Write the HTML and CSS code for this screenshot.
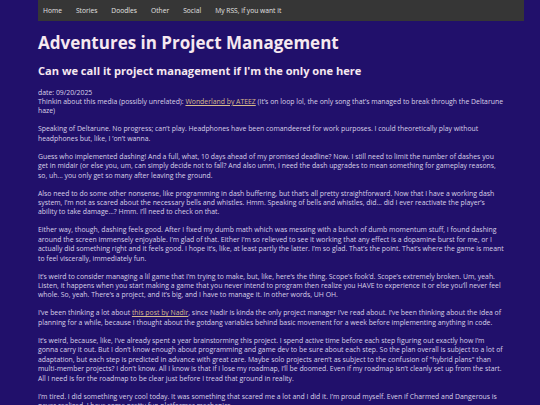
FILE: index.html
```html
<!DOCTYPE html>
<html lang="en">
<head>
    <meta charset="UTF-8">
    <meta name="viewport" content="width=device-width, initial-scale=1.0">
    <title>Adventures in Project Management</title>
    <link rel="stylesheet" href="styles.css">
</head>
<body>

    <!-- Top navigation -->
    <nav class="topnav">
        <a href="#">Home</a>
        <a href="#">Stories</a>
        <a href="#">Doodles</a>
        <a href="#">Other</a>
        <a href="#">Social</a>
        <a href="#">My RSS, if you want it</a>
    </nav>

    <main class="post">
        <h1>Adventures in Project Management</h1>
        <h2>Can we call it project management if I'm the only one here</h2>

        <p>date: 09/20/2025<br>
        Thinkin about this media (possibly unrelated): <a href="#">Wonderland by ATEEZ</a> (It’s on loop lol, the only song that’s managed to break through the Deltarune haze)</p>

        <p>Speaking of Deltarune. No progress; can’t play. Headphones have been comandeered for work purposes. I could theoretically play without headphones but, like, I ’on’t wanna.</p>

        <p>Guess who implemented dashing! And a full, what, 10 days ahead of my promised deadline? Now. I still need to limit the number of dashes you get in midair (or else you, um, can simply decide not to fall? And also umm, I need the dash upgrades to mean something for gameplay reasons, so, uh... you only get so many after leaving the ground.</p>

        <p>Also need to do some other nonsense, like programming in dash buffering, but that’s all pretty straightforward. Now that I have a working dash system, I’m not as scared about the necessary bells and whistles. Hmm. Speaking of bells and whistles, did... did I ever reactivate the player’s ability to take damage...? Hmm. I’ll need to check on that.</p>

        <p>Either way, though, dashing feels good. After I fixed my dumb math which was messing with a bunch of dumb momentum stuff, I found dashing around the screen immensely enjoyable. I’m glad of that. Either I’m so relieved to see it working that any effect is a dopamine burst for me, or I actually did something right and it feels good. I hope it’s, like, at least partly the latter. I’m so glad. That’s the point. That’s where the game is meant to feel viscerally, immediately fun.</p>

        <p>It’s weird to consider managing a lil game that I’m trying to make, but, like, here’s the thing. Scope’s fook’d. Scope’s extremely broken. Um, yeah. Listen, it happens when you start making a game that you never intend to program then realize you HAVE to experience it or else you’ll never feel whole. So, yeah. There’s a project, and it’s big, and I have to manage it. In other words, UH OH.</p>

        <p>I’ve been thinking a lot about <a href="#">this post by Nadir</a>, since Nadir is kinda the only project manager I’ve read about. I’ve been thinking about the idea of planning for a while, because I thought about the gotdang variables behind basic movement for a week before implementing anything in code.</p>

        <p>It’s weird, because, like, I’ve already spent a year brainstorming this project. I spend active time before each step figuring out exactly how I’m gonna carry it out. But I don’t know enough about programming and game dev to be sure about each step. So the plan overall is subject to a lot of adaptation, but each step is predicted in advance with great care. Maybe solo projects aren’t as subject to the confusion of "hybrid plans" than multi-member projects? I don’t know. All I know is that if I lose my roadmap, I’ll be doomed. Even if my roadmap isn’t cleanly set up from the start. All I need is for the roadmap to be clear just before I tread that ground in reality.</p>

        <p>I’m tired. I did something very cool today. It was something that scared me a lot and I did it. I’m proud myself. Even if Charmed and Dangerous is never realized, I have some pretty fun platformer mechanics.</p>
    </main>

</body>
</html>
```

FILE: styles.css
```css
body {
    font-family: "Open Sans", Arial, sans-serif;
    background-color: #21106b;
    color: #d9d0e8;
    margin: 0;
    padding: 0 16px 0 38px;
}

.topnav {
    display: flex;
    background-color: #363636;
    height: 21px;
    align-items: center;
    padding: 0 5px;
    gap: 14px;
}

.topnav a {
    color: #e2e2e2;
    text-decoration: none;
    font-size: 6.7px;
}

.post {
    padding-right: 19px;
}

.post h1 {
    font-size: 17px;
    color: #f6e8f0;
    margin: 10px 0 0;
    line-height: 24px;
}

.post h2 {
    font-size: 11.1px;
    color: #f6e8f0;
    margin: 8px 0 0;
    line-height: 16px;
}

.post p {
    font-size: 6.87px;
    line-height: 9.4px;
    margin: 8.6px 0;
}

.post p a {
    color: #d8bb8c;
}
```
